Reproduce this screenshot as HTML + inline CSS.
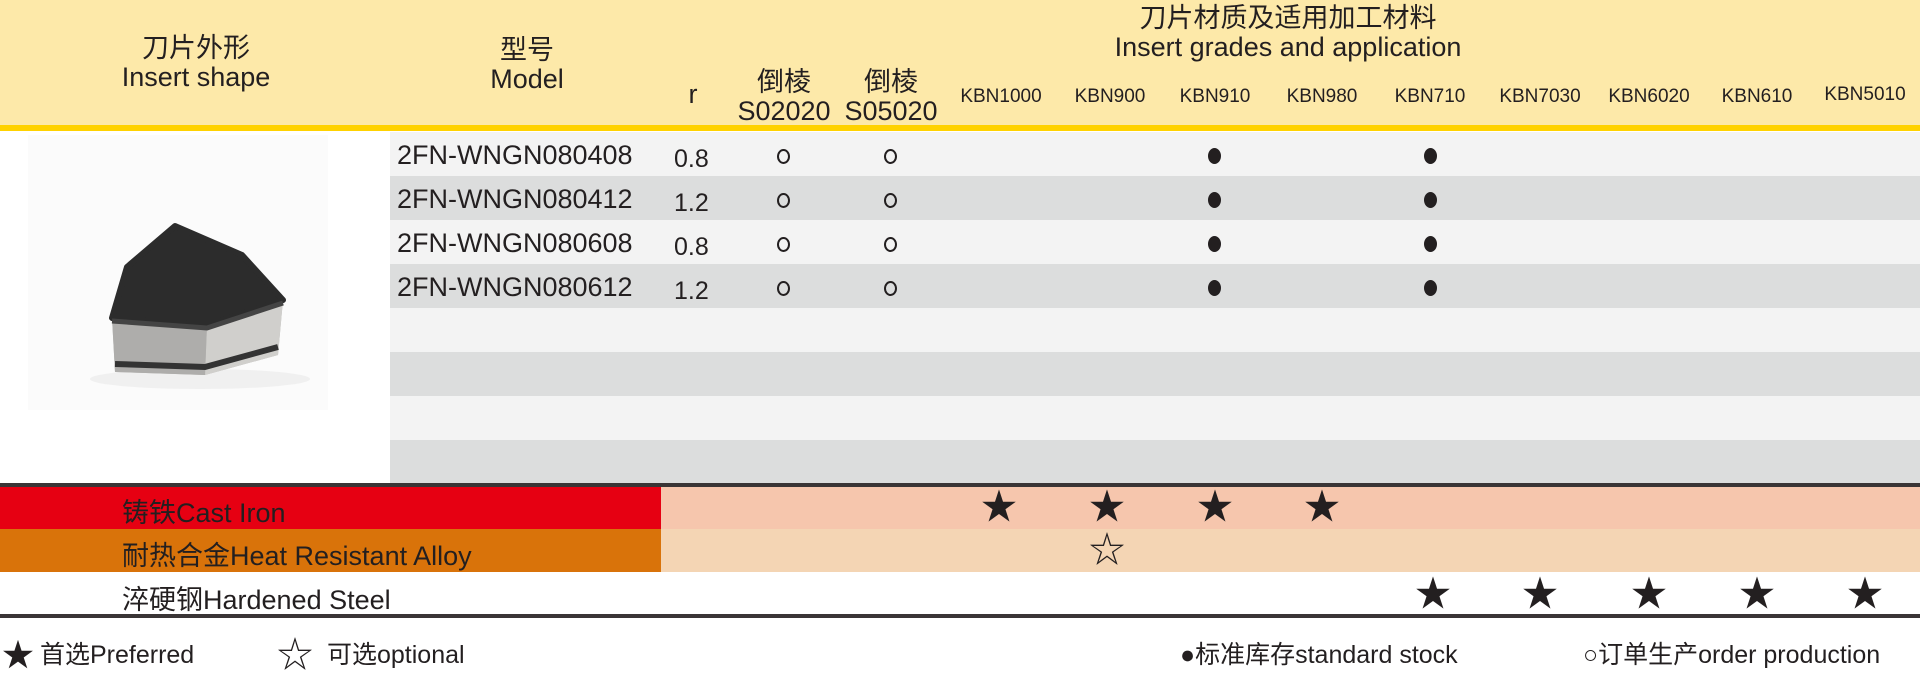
<!DOCTYPE html>
<html><head><meta charset="utf-8"><style>
*{margin:0;padding:0;box-sizing:border-box}
body{width:1920px;height:676px;position:relative;background:#fff;font-family:"Liberation Sans","Noto Sans CJK SC",sans-serif;color:#231f20;overflow:hidden}
.a{position:absolute;white-space:nowrap}
.c{transform:translateX(-50%);text-align:center}
.h{font-size:27px;line-height:29px}
.k{font-size:19px;top:86px}
.row{position:absolute;left:390px;width:1530px;height:44px}
.m{font-size:27px;left:397px}
.r{font-size:25px}
.oc{width:13px;height:15px;border:2px solid #231f20;border-radius:50%}
.dot{width:13px;height:16px;background:#231f20;border-radius:50%}
.star{font-size:36px;line-height:36px}
.lab{font-size:27px;left:122px}
.lg{font-size:25px;top:635px}
</style></head><body>
<div class="a" style="left:0;top:0;width:1920px;height:127px;background:#fde9a9"></div>
<div class="a" style="left:0;top:125px;width:1920px;height:6px;background:#ffd200"></div>

<div class="a c h" style="left:196px;top:34px">刀片外形<br>Insert shape</div>
<div class="a c h" style="left:527px;top:36px">型号<br>Model</div>
<div class="a c h" style="left:693px;top:80px">r</div>
<div class="a c h" style="left:784px;top:68px">倒棱<br>S02020</div>
<div class="a c h" style="left:891px;top:68px">倒棱<br>S05020</div>
<div class="a c h" style="left:1288px;top:4px">刀片材质及适用加工材料<br>Insert grades and application</div>
<div class="a c k" style="left:1001px">KBN1000</div>
<div class="a c k" style="left:1110px">KBN900</div>
<div class="a c k" style="left:1215px">KBN910</div>
<div class="a c k" style="left:1322px">KBN980</div>
<div class="a c k" style="left:1430px">KBN710</div>
<div class="a c k" style="left:1540px">KBN7030</div>
<div class="a c k" style="left:1649px">KBN6020</div>
<div class="a c k" style="left:1757px">KBN610</div>
<div class="a c k" style="left:1865px;top:84px">KBN5010</div>

<div class="row" style="top:132px;background:#f3f3f3"></div>
<div class="row" style="top:176px;background:#dcdddd"></div>
<div class="row" style="top:220px;background:#f3f3f3"></div>
<div class="row" style="top:264px;background:#dcdddd"></div>
<div class="row" style="top:308px;background:#f3f3f3"></div>
<div class="row" style="top:352px;background:#dcdddd"></div>
<div class="row" style="top:396px;background:#f3f3f3"></div>
<div class="row" style="top:440px;background:#dcdddd"></div>

<svg class="a" style="left:0;top:131px" width="390" height="353">
<rect x="28" y="4" width="300" height="275" fill="#fbfbfb"/>
<ellipse cx="200" cy="248" rx="110" ry="10" fill="#f0f0f0"/>
<polygon points="112,187 115,241 205,244 278,224 283,169 207,194" fill="#b8b7b5"/>
<polygon points="207,194 205,244 278,224 283,169" fill="#d0cfcc"/>
<polygon points="112,187 115,241 205,244 207,194" fill="#aeadab"/>
<polyline points="115,233 205,236 278,216" fill="none" stroke="#333" stroke-width="6"/>
<polygon points="175,95 127,136 112,187 207,194 283,169 242,124" fill="#2c2c2c" stroke="#2c2c2c" stroke-width="6" stroke-linejoin="round"/>
<polyline points="112,190 207,197 283,172" fill="none" stroke="#444" stroke-width="5"/>
</svg>

<div class="a m" style="top:140px">2FN-WNGN080408</div>
<div class="a m" style="top:184px">2FN-WNGN080412</div>
<div class="a m" style="top:228px">2FN-WNGN080608</div>
<div class="a m" style="top:272px">2FN-WNGN080612</div>
<div class="a r" style="left:674px;top:145px">0.8</div>
<div class="a r" style="left:674px;top:189px">1.2</div>
<div class="a r" style="left:674px;top:233px">0.8</div>
<div class="a r" style="left:674px;top:277px">1.2</div>

<div class="a oc" style="left:777px;top:149px"></div><div class="a oc" style="left:884px;top:149px"></div>
<div class="a oc" style="left:777px;top:193px"></div><div class="a oc" style="left:884px;top:193px"></div>
<div class="a oc" style="left:777px;top:237px"></div><div class="a oc" style="left:884px;top:237px"></div>
<div class="a oc" style="left:777px;top:281px"></div><div class="a oc" style="left:884px;top:281px"></div>
<div class="a dot" style="left:1208px;top:148px"></div><div class="a dot" style="left:1424px;top:148px"></div>
<div class="a dot" style="left:1208px;top:192px"></div><div class="a dot" style="left:1424px;top:192px"></div>
<div class="a dot" style="left:1208px;top:236px"></div><div class="a dot" style="left:1424px;top:236px"></div>
<div class="a dot" style="left:1208px;top:280px"></div><div class="a dot" style="left:1424px;top:280px"></div>

<div class="a" style="left:0;top:483px;width:1920px;height:4px;background:#3a3536"></div>
<div class="a" style="left:0;top:487px;width:661px;height:42px;background:#e60012"></div>
<div class="a" style="left:661px;top:487px;width:1259px;height:42px;background:#f6c6ad"></div>
<div class="a" style="left:0;top:529px;width:661px;height:43px;background:#d9730a"></div>
<div class="a" style="left:661px;top:529px;width:1259px;height:43px;background:#f4d5b4"></div>
<div class="a" style="left:0;top:614px;width:1920px;height:4px;background:#3a3536"></div>

<div class="a lab" style="top:491px">铸铁Cast Iron</div>
<div class="a lab" style="top:534px">耐热合金Heat Resistant Alloy</div>
<div class="a lab" style="top:578px">淬硬钢Hardened Steel</div>

<div class="a c star" style="left:999px;top:489px">★</div>
<div class="a c star" style="left:1107px;top:489px">★</div>
<div class="a c star" style="left:1215px;top:489px">★</div>
<div class="a c star" style="left:1322px;top:489px">★</div>
<div class="a c star" style="left:1107px;top:532px">☆</div>
<div class="a c star" style="left:1433px;top:576px">★</div>
<div class="a c star" style="left:1540px;top:576px">★</div>
<div class="a c star" style="left:1649px;top:576px">★</div>
<div class="a c star" style="left:1757px;top:576px">★</div>
<div class="a c star" style="left:1865px;top:576px">★</div>

<div class="a" style="left:2px;top:630px;font-size:32px">★</div>
<div class="a lg" style="left:40px">首选Preferred</div>
<div class="a" style="left:277px;top:626px;font-size:36px">☆</div>
<div class="a lg" style="left:327px">可选optional</div>
<div class="a lg" style="left:1180px">●标准库存standard stock</div>
<div class="a lg" style="left:1583px">○订单生产order production</div>
</body></html>
